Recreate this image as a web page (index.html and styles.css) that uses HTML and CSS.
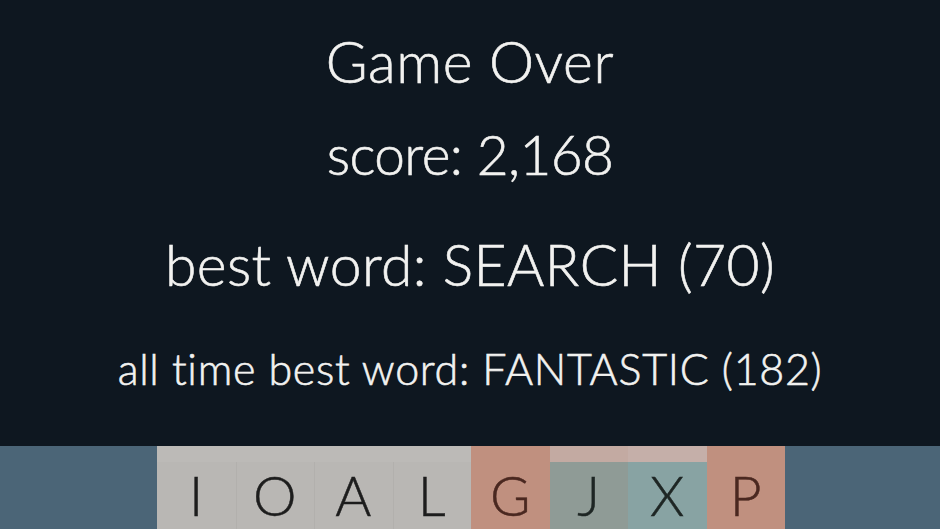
FILE: index.html
```html
<!DOCTYPE html>
<html>
<head>
<meta charset="utf-8">
<link rel="stylesheet" href="styles.css">
</head>
<body>
<div class="screen">
  <div class="results">
    <div class="line title">Game Over</div>
    <div class="line score">score: 2,168</div>
    <div class="line best">best word: SEARCH (70)</div>
    <div class="line alltime">all time best word: FANTASTIC (182)</div>
  </div>
  <div class="rack">
    <div class="tiles">
      <div class="tile plain"><span class="band"></span><span class="letter">I</span></div>
      <div class="tile plain"><span class="band"></span><span class="letter">O</span></div>
      <div class="tile plain"><span class="band"></span><span class="letter">A</span></div>
      <div class="tile plain"><span class="band"></span><span class="letter">L</span></div>
      <div class="tile rose"><span class="band"></span><span class="letter">G</span></div>
      <div class="tile sage"><span class="band"></span><span class="letter">J</span></div>
      <div class="tile teal"><span class="band"></span><span class="letter">X</span></div>
      <div class="tile rose"><span class="band"></span><span class="letter">P</span></div>
    </div>
  </div>
</div>
</body>
</html>
```
FILE: styles.css
```css
html, body {
  margin: 0;
  padding: 0;
  background: #0e1720;
}
.screen {
  width: 940px;
  height: 529px;
  display: flex;
  flex-direction: column;
  overflow: hidden;
  font-family: "Lato", "DejaVu Sans", sans-serif;
  color: #f2f2f0;
}
.results {
  height: 446px;
  flex-shrink: 0;
  display: flex;
  flex-direction: column;
  align-items: center;
}
.line {
  white-space: nowrap;
  line-height: 1;
  font-weight: 300;
  -webkit-text-stroke: 0.6px currentColor;
}
.title {
  font-size: 57px;
  letter-spacing: 0.6px;
  margin-top: 33px;
}
.score {
  font-size: 55px;
  letter-spacing: -0.6px;
  margin-top: 37px;
}
.best {
  font-size: 57px;
  letter-spacing: 0.4px;
  margin-top: 54px;
}
.alltime {
  font-size: 43px;
  letter-spacing: 0.7px;
  margin-top: 54px;
}
.rack {
  flex: 1;
  min-height: 0;
  background: #4b6577;
  display: flex;
  justify-content: center;
}
.tiles {
  display: flex;
  margin-left: 2px;
}
.tile {
  width: 78.5px;
  display: flex;
  flex-direction: column;
  align-items: center;
}
.plain + .plain {
  box-shadow: inset 1px 0 0 #b2b0ad;
}
.band {
  align-self: stretch;
  height: 16px;
  flex-shrink: 0;
}
.letter {
  font-size: 55px;
  font-weight: 300;
  line-height: 1.2;
  color: #1d1d1d;
  -webkit-text-stroke: 0.5px currentColor;
}
.plain { background: #b9b7b4; }
.plain .band { background: #bcbab7; }
.rose { background: #c0907f; }
.rose .band { background: #c0907f; }
.rose .letter { color: #4a2820; }
.sage { background: #8f9b96; }
.sage .band { background: #c3aaa2; }
.teal { background: #88a3a3; }
.teal .band { background: #c5afa9; }
.sage .letter, .teal .letter { color: #1e2624; }
```
